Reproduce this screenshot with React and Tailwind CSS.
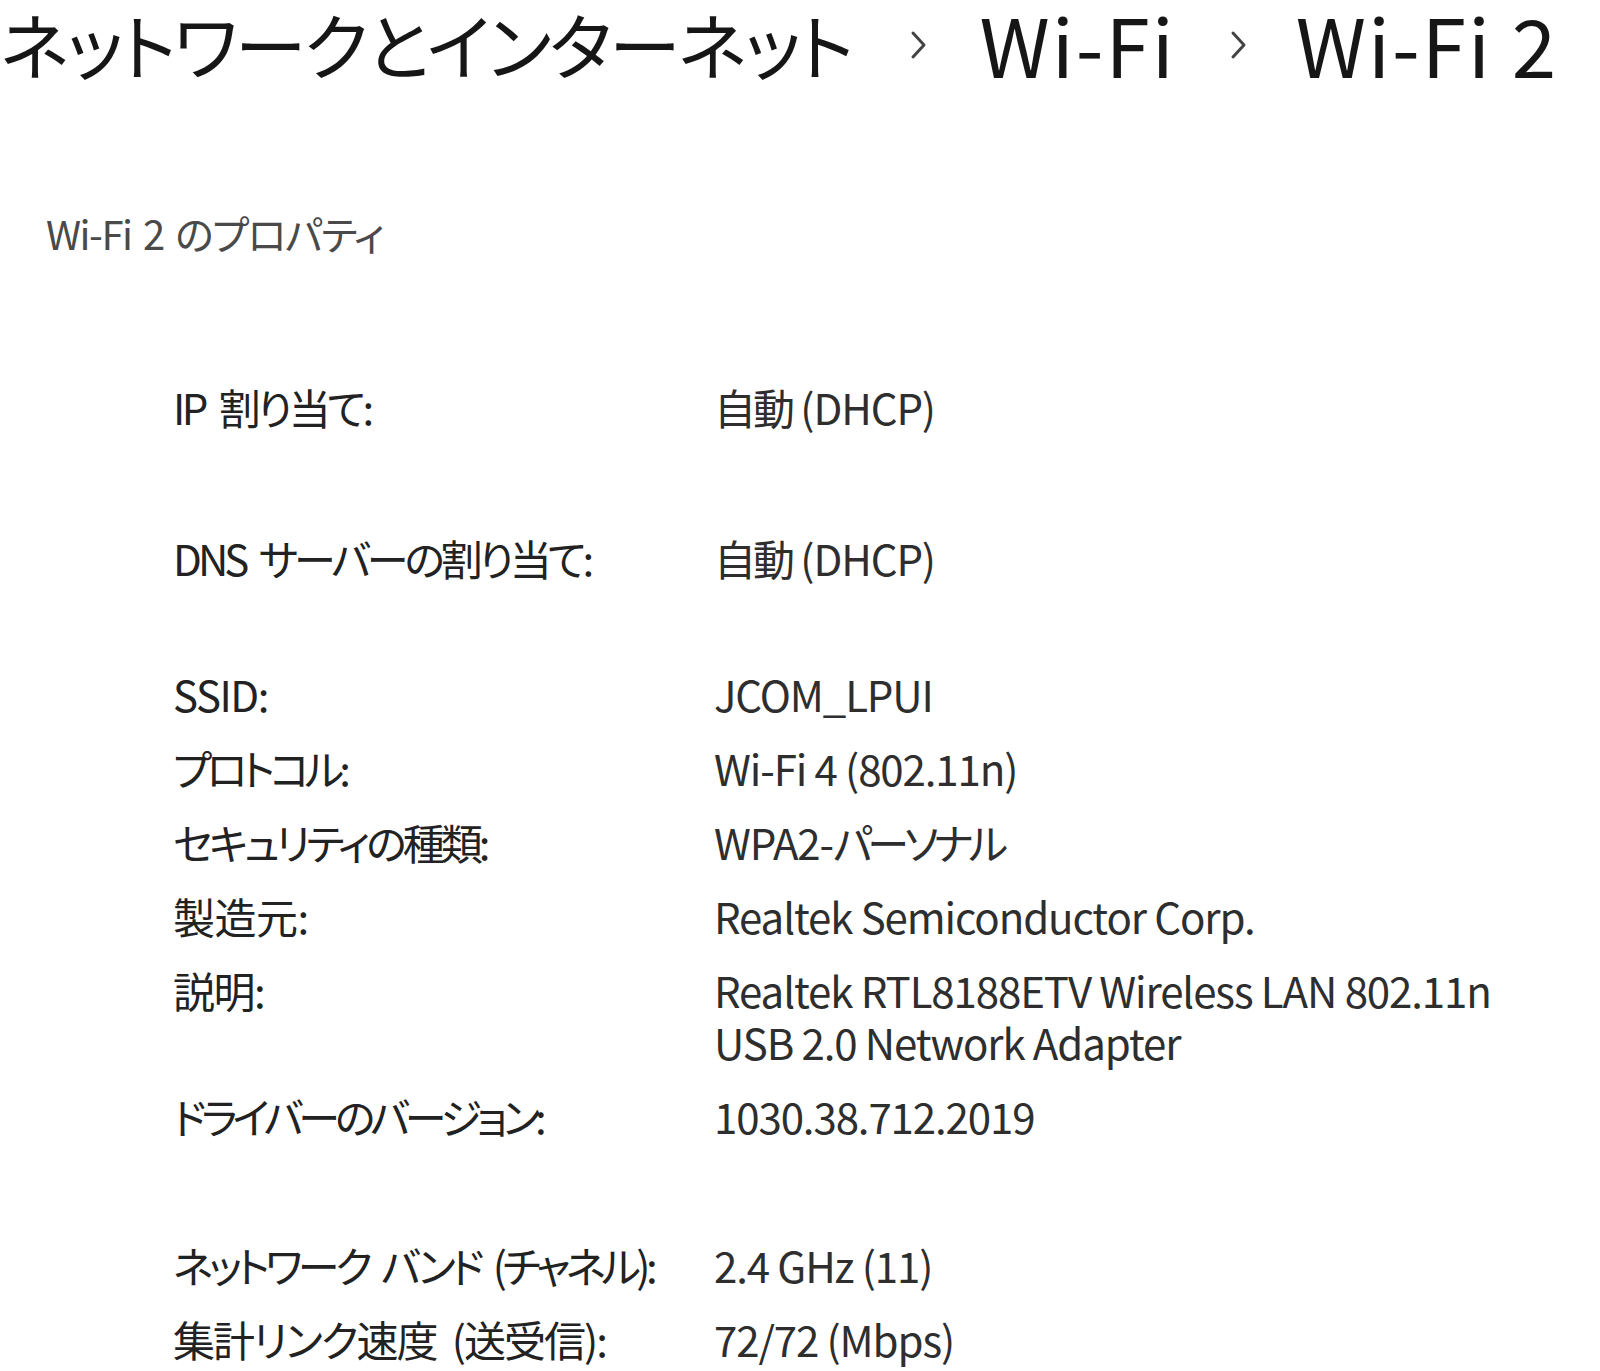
import React from "react";

function Row({ label, lt = "-3px", children, className = "" }) {
  return (
    <div className={`grid grid-cols-[541px_1fr] ${className}`}>
      <div
        className="whitespace-nowrap text-[42px] leading-[52px] text-[#222] [font-feature-settings:'palt'] [word-spacing:8px]"
        style={{ letterSpacing: lt }}
      >
        {label}
      </div>
      <div className="whitespace-nowrap text-[42px] leading-[52px] text-[#2e2e2e] [font-feature-settings:'palt'] tracking-[-1.1px]">
        {children}
      </div>
    </div>
  );
}

function J({ children, className = "tracking-[-3px]" }) {
  return <span className={className}>{children}</span>;
}

function Chevron() {
  return (
    <svg width="20" height="32" viewBox="0 0 20 32" className="mt-[4px] shrink-0">
      <path d="M5 4 L16 16 L5 28" fill="none" stroke="#444" strokeWidth="3" strokeLinecap="round" strokeLinejoin="round" />
    </svg>
  );
}

export default function App() {
  return (
    <div
      className="w-[1600px] h-[1371px] bg-white overflow-hidden"
      style={{ fontFamily: "'Noto Sans CJK JP', 'Noto Sans', sans-serif" }}
    >
      <h1 className="flex items-center h-[86px] whitespace-nowrap leading-[86px] font-normal text-[#161616] [font-feature-settings:'palt']">
        <span className="shrink-0 text-[72px] tracking-[-2.5px]">ネットワークとインターネット</span>
        <span className="shrink-0 ml-[56px] mr-[52px]"><Chevron /></span>
        <span className="shrink-0 text-[80px] tracking-[2px]">Wi-Fi</span>
        <span className="shrink-0 ml-[52px] mr-[48px]"><Chevron /></span>
        <span className="shrink-0 text-[80px] tracking-[2px]">Wi-Fi 2</span>
      </h1>

      <div className="pl-[46px] mt-[125px] whitespace-nowrap text-[40px] leading-[44px] text-[#4a4a4a] [font-feature-settings:'palt'] tracking-[-1.5px] [word-spacing:4px]">
        Wi-Fi 2 のプロパティ
      </div>

      <div className="pl-[173px] mt-[126px] flex flex-col">
        <Row label="IP 割り当て:" lt="-3.5px"><J>自動</J> (DHCP)</Row>
        <Row label="DNS サーバーの割り当て:" lt="-4px" className="mt-[99px]"><J>自動</J> (DHCP)</Row>
        <div className="mt-[84px] flex flex-col gap-[22px]">
          <Row label="SSID:" lt="-1.5px">JCOM_LPUI</Row>
          <Row label="プロトコル:" lt="-5px">Wi-Fi 4 (802.11n)</Row>
          <Row label="セキュリティの種類:" lt="-4px">WPA2-<J className="tracking-[-5px]">パーソナル</J></Row>
          <Row label="製造元:" lt="-0.5px">Realtek Semiconductor Corp.</Row>
          <Row label="説明:" lt="-1.5px">
            <span className="block">Realtek RTL8188ETV Wireless LAN 802.11n</span>
            <span className="block">USB 2.0 Network Adapter</span>
          </Row>
          <Row label="ドライバーのバージョン:" lt="-5px">1030.38.712.2019</Row>
        </div>
        <div className="mt-[97px] flex flex-col gap-[22px]">
          <Row label="ネットワーク バンド (チャネル):" lt="-4.5px">2.4 GHz (11)</Row>
          <Row label="集計リンク速度 (送受信):" lt="-2px">72/72 (Mbps)</Row>
        </div>
      </div>
    </div>
  );
}
